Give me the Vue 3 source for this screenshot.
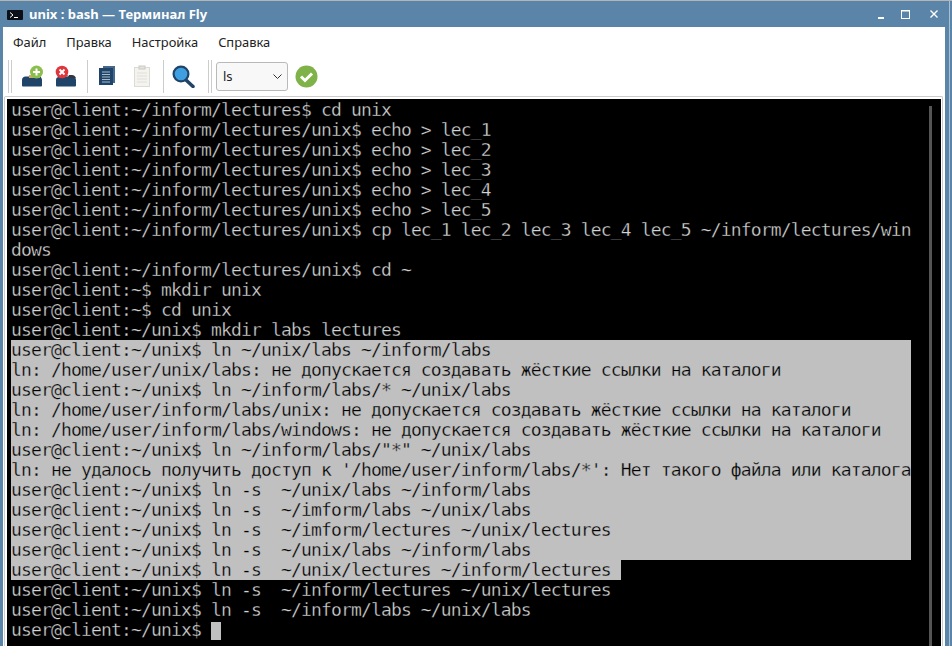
<script setup>
const lines = [
  'user@client:~/inform/lectures$ cd unix',
  'user@client:~/inform/lectures/unix$ echo > lec_1',
  'user@client:~/inform/lectures/unix$ echo > lec_2',
  'user@client:~/inform/lectures/unix$ echo > lec_3',
  'user@client:~/inform/lectures/unix$ echo > lec_4',
  'user@client:~/inform/lectures/unix$ echo > lec_5',
  'user@client:~/inform/lectures/unix$ cp lec_1 lec_2 lec_3 lec_4 lec_5 ~/inform/lectures/win',
  'dows',
  'user@client:~/inform/lectures/unix$ cd ~',
  'user@client:~$ mkdir unix',
  'user@client:~$ cd unix',
  'user@client:~/unix$ mkdir labs lectures',
  { t: 'user@client:~/unix$ ln ~/unix/labs ~/inform/labs', s: 1 },
  { t: 'ln: /home/user/unix/labs: не допускается создавать жёсткие ссылки на каталоги', s: 1 },
  { t: 'user@client:~/unix$ ln ~/inform/labs/* ~/unix/labs', s: 1 },
  { t: 'ln: /home/user/inform/labs/unix: не допускается создавать жёсткие ссылки на каталоги', s: 1 },
  { t: 'ln: /home/user/inform/labs/windows: не допускается создавать жёсткие ссылки на каталоги', s: 1 },
  { t: 'user@client:~/unix$ ln ~/inform/labs/"*" ~/unix/labs', s: 1 },
  { t: "ln: не удалось получить доступ к '/home/user/inform/labs/*': Нет такого файла или каталога", s: 1 },
  { t: 'user@client:~/unix$ ln -s  ~/unix/labs ~/inform/labs', s: 1 },
  { t: 'user@client:~/unix$ ln -s  ~/imform/labs ~/unix/labs', s: 1 },
  { t: 'user@client:~/unix$ ln -s  ~/imform/lectures ~/unix/lectures', s: 1 },
  { t: 'user@client:~/unix$ ln -s  ~/unix/labs ~/inform/labs', s: 1 },
  { t: 'user@client:~/unix$ ln -s  ~/unix/lectures ~/inform/lectures ', s: 2 },
  'user@client:~/unix$ ln -s  ~/inform/lectures ~/unix/lectures',
  'user@client:~/unix$ ln -s  ~/inform/labs ~/unix/labs',
].map(l => (typeof l === 'string' ? { t: l, s: 0 } : l))
const menu = ['Файл', 'Правка', 'Настройка', 'Справка']
</script>

<template>
  <div class="win">
    <header class="title">
      <svg class="appicon" width="16" height="10" viewBox="0 0 16 10">
        <rect width="16" height="10" rx="1" fill="#0b0f17" />
        <path d="M3 2.500l3 2.500-3 2.500" fill="none" stroke="#fff" stroke-width="1" />
        <path d="M7 7.500h4" stroke="#fff" stroke-width="1" />
      </svg>
      <span class="title-text">unix : bash — Терминал Fly</span>
      <div class="controls">
        <svg class="min" width="6" height="2" viewBox="0 0 6 2"><rect width="6" height="2" fill="#fff" /></svg>
        <svg class="max" width="9" height="9" viewBox="0 0 9 9"><rect x=".5" y=".5" width="8" height="8" fill="none" stroke="#fff" /><path d="M0 1h9" stroke="#fff" /></svg>
        <svg class="close" width="8" height="8" viewBox="0 0 8 8"><path d="M.5.5l7 7M7.500.5l-7 7" stroke="#fff" stroke-width="1.400" /></svg>
      </div>
    </header>
    <div class="client">
      <nav class="menu"><span v-for="m in menu" :key="m">{{ m }}</span></nav>
      <div class="toolbar">
        <i class="grip"></i>
        <svg class="i-add" width="24" height="22" viewBox="0 0 24 22">
          <path d="M9 10h11v4H9z" fill="#c7ab63" />
          <path d="M2 15c0-2 1.500-3.500 3.500-3.500H9V13h11v-1.500c1 .5 2 2 2 3.500v5.500c0 .5-.5 1-1 1H3c-.5 0-1-.5-1-1z" fill="#1f4468" />
          <circle cx="16.500" cy="7" r="6.500" fill="#8cbe4e" />
          <path d="M13 7h7M16.500 3.500v7" stroke="#fff" stroke-width="2" />
        </svg>
        <svg class="i-del" width="22" height="22" viewBox="0 0 22 22">
          <path d="M4 10h9v3H4z" fill="#8a8f96" />
          <path d="M1 15c0-2 1-3 3-3h9l1-1h3c2 0 4 2 4 4v5.500c0 .5-.5 1-1 1H2c-.5 0-1-.5-1-1z" fill="#1f4468" />
          <path d="M13 12l1-2h3c2 0 3 1 4 3l-8 0z" fill="#33373d" />
          <circle cx="7" cy="7" r="6.300" fill="#e0353b" />
          <path d="M4.500 4.500l5 5M9.500 4.500l-5 5" stroke="#fff" stroke-width="2" />
        </svg>
        <i class="sep s1"></i>
        <svg class="i-doc" width="18" height="20" viewBox="0 0 18 20">
          <path d="M5 0h12v17H5z" fill="#45688c" />
          <path d="M1 2h14v17H1z" fill="#1f4468" />
          <path d="M4 6h8M4 8.500h8M4 11h8M4 13.500h8M4 16h8" stroke="#a9bacb" stroke-width="1" />
        </svg>
        <svg class="i-clip" width="18" height="22" viewBox="0 0 18 22">
          <rect x="1.500" y="2.500" width="15" height="19" fill="#f4f3ee" stroke="#dcdcd6" />
          <rect x="6" y="1" width="6" height="3" fill="#e4e4df" stroke="#c9c9c4" />
          <path d="M4 8h10M4 11h10M4 14h10M4 17h10" stroke="#e0e0dc" />
        </svg>
        <i class="sep s2"></i>
        <svg class="i-lens" width="24" height="23" viewBox="0 0 24 23">
          <path d="M14 15l7 6.500" stroke="#1f4468" stroke-width="3.500" stroke-linecap="round" />
          <circle cx="9" cy="9" r="7.400" fill="#3f9fe0" stroke="#1f4468" stroke-width="2.200" />
        </svg>
        <i class="grip g2"></i>
        <div class="combo">
          <span>ls</span>
          <svg width="9" height="5" viewBox="0 0 9 5"><path d="M.5.500l4 4 4-4" fill="none" stroke="#333" stroke-width="1" /></svg>
        </div>
        <svg class="ok" width="23" height="23" viewBox="0 0 23 23">
          <circle cx="11.500" cy="11.500" r="11" fill="#80b24a" />
          <path d="M6 11.500l4 4 7-7" fill="none" stroke="#fff" stroke-width="3" />
        </svg>
      </div>
      <div class="frame">
        <div class="term">
          <div class="scroll"></div>
          <div v-for="(l, i) in lines" :key="i" class="row" :class="{ sel: l.s === 1 }">
            <span :class="{ selp: l.s === 2 }">{{ l.t }}</span>
          </div>
          <div class="row">user@client:~/unix$ <span class="cursor"></span></div>
        </div>
      </div>
    </div>
  </div>
</template>

<style scoped>
.win {
  width: 952px;
  height: 646px;
  box-sizing: border-box;
  overflow: hidden;
  display: flex;
  flex-direction: column;
  background: linear-gradient(to right, #5a84a8 949px, #a9c0d4 949px, #a9c0d4 950px, #5a84a8 950px);
  border-top: 1px solid #b5b5b5;
  padding: 0 2px 0 3px;
}
.title {
  height: 26px;
  flex: none;
  display: flex;
  align-items: center;
  padding-left: 4px;
  color: #fff;
  font: 700 13px "Noto Sans", sans-serif;
}
.appicon { margin: 2px 6px 0 0; }
.controls {
  margin-left: auto;
  display: flex;
  align-items: center;
  padding-right: 12px;
}
.min { margin-top: 7px; }
.max { margin-left: 17px; }
.close { margin-left: 20px; }
.client {
  flex: 1;
  min-height: 0;
  background: #fff;
  display: flex;
  flex-direction: column;
  width: 942px;
}
.menu {
  height: 29px;
  flex: none;
  display: flex;
  align-items: center;
  gap: 20px;
  padding-left: 10px;
  font: 12.900px "Noto Sans", sans-serif;
  color: #222;
}
.toolbar {
  height: 40px;
  flex: none;
  display: flex;
  align-items: center;
  padding-left: 5px;
}
.grip {
  width: 4px;
  height: 33px;
  border-left: 1px solid #ccc;
  border-right: 1px solid #ccc;
  box-sizing: border-box;
  flex: none;
}
.sep { width: 1px; height: 33px; background: #ccc; flex: none; }
.i-add { margin-left: 8px; flex: none; }
.i-del { margin-left: 11px; flex: none; }
.s1 { margin-left: 10px; }
.i-doc { margin-left: 10px; flex: none; }
.i-clip { margin-left: 17px; flex: none; }
.s2 { margin-left: 12px; }
.i-lens { margin-left: 8px; flex: none; }
.g2 { margin-left: 12px; }
.combo {
  margin-left: 4px;
  width: 72px;
  height: 29px;
  box-sizing: border-box;
  border: 1px solid #b9b9b9;
  border-radius: 3px;
  background: #f8f8f8;
  display: flex;
  align-items: center;
  justify-content: space-between;
  padding: 0 5px 0 6px;
  font: 13px "Noto Sans", sans-serif;
  color: #222;
  flex: none;
}
.ok { margin-left: 7px; flex: none; }
.frame {
  flex: 1;
  min-height: 0;
  margin: 0 0 0 1px;
  border: 1px solid #ccc;
  border-bottom: 0;
  padding: 2px 0 0 2px;
  overflow: hidden;
  border-radius: 2px 2px 0 0;
  width: 939px;
  box-sizing: border-box;
}
.term {
  position: relative;
  height: 100%;
  background: #000;
  padding: 1px 0 0 4px;
  font: 18px/20px "DejaVu Sans Mono", monospace;
  letter-spacing: -0.84px;
  color: #d4d4d4;
  -webkit-text-stroke: 0.3px #000;
  white-space: pre;
  margin-right: 1px;
}
.row { height: 20px; width: 900px; }
.sel { background: #c0c0c0; color: #000; -webkit-text-stroke-color: #c0c0c0; }
.selp { background: #c0c0c0; color: #000; -webkit-text-stroke-color: #c0c0c0; display: inline-block; height: 20px; }
.cursor {
  display: inline-block;
  width: 10px;
  height: 18px;
  background: #c0c0c0;
  vertical-align: -4px;
}
.scroll {
  position: absolute;
  left: 922px;
  top: 7px;
  bottom: 0;
  width: 3px;
  background: #555;
}
</style>

<style>
html, body { margin: 0; background: #5a84a8; }
</style>
